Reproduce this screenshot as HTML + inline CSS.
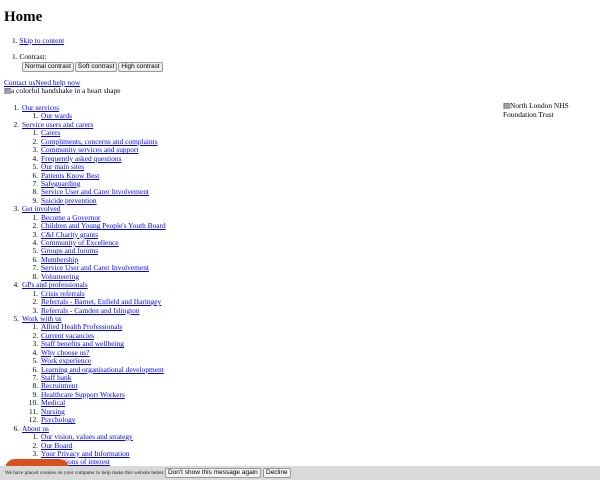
<!DOCTYPE html>
<html><head><style>
body{margin:0;width:600px;height:480px;overflow:hidden;background:#fff;font-family:"Liberation Serif",serif;font-size:7.4px;color:#000;position:relative}
a{color:#00e}
.a{position:absolute;white-space:nowrap;line-height:8.44px}
h1{position:absolute;left:4px;top:9px;margin:0;font-size:15px;font-weight:bold}
button{font-family:"Liberation Sans",sans-serif;font-size:6.5px;padding:0 2px;height:10px;background:#efefef;border:1px solid #999;border-radius:2px;margin:0 1px 0 0;line-height:8px}
.n{display:inline-block;text-align:right}
.l1 .n{width:19px}
.l2 .n{width:38px}
.list div{height:8.44px;white-space:nowrap}
.list span.t{margin-left:3px}
</style></head><body>
<h1>Home</h1>
<div class="a" style="left:12px;top:37px">1. <a href="#">Skip to content</a></div>
<div class="a" style="left:12px;top:53px">1. Contrast:</div>
<div class="a" style="left:22px;top:62px"><button>Normal contrast</button><button>Soft contrast</button><button>High contrast</button></div>
<div class="a" style="left:4px;top:79px"><a href="#">Contact us</a><a href="#">Need help now</a></div>
<div class="a" style="left:4px;top:87px">&#9636;a colorful handshake in a heart shape</div>
<div class="a" style="left:503px;top:102px;line-height:8.5px">&#9636;North London NHS<br>Foundation Trust</div>
<div class="list" style="position:absolute;left:0;top:104px;line-height:8.44px">
<div class="l1"><span class="n">1.</span><span class="t"><a href="#">Our services</a></span></div>
<div class="l2"><span class="n">1.</span><span class="t"><a href="#">Our wards</a></span></div>
<div class="l1"><span class="n">2.</span><span class="t"><a href="#">Service users and carers</a></span></div>
<div class="l2"><span class="n">1.</span><span class="t"><a href="#">Carers</a></span></div>
<div class="l2"><span class="n">2.</span><span class="t"><a href="#">Compliments, concerns and complaints</a></span></div>
<div class="l2"><span class="n">3.</span><span class="t"><a href="#">Community services and support</a></span></div>
<div class="l2"><span class="n">4.</span><span class="t"><a href="#">Frequently asked questions</a></span></div>
<div class="l2"><span class="n">5.</span><span class="t"><a href="#">Our main sites</a></span></div>
<div class="l2"><span class="n">6.</span><span class="t"><a href="#">Patients Know Best</a></span></div>
<div class="l2"><span class="n">7.</span><span class="t"><a href="#">Safeguarding</a></span></div>
<div class="l2"><span class="n">8.</span><span class="t"><a href="#">Service User and Carer Involvement</a></span></div>
<div class="l2"><span class="n">9.</span><span class="t"><a href="#">Suicide prevention</a></span></div>
<div class="l1"><span class="n">3.</span><span class="t"><a href="#">Get involved</a></span></div>
<div class="l2"><span class="n">1.</span><span class="t"><a href="#">Become a Governor</a></span></div>
<div class="l2"><span class="n">2.</span><span class="t"><a href="#">Children and Young People's Youth Board</a></span></div>
<div class="l2"><span class="n">3.</span><span class="t"><a href="#">C&amp;I Charity grants</a></span></div>
<div class="l2"><span class="n">4.</span><span class="t"><a href="#">Community of Excellence</a></span></div>
<div class="l2"><span class="n">5.</span><span class="t"><a href="#">Groups and forums</a></span></div>
<div class="l2"><span class="n">6.</span><span class="t"><a href="#">Membership</a></span></div>
<div class="l2"><span class="n">7.</span><span class="t"><a href="#">Service User and Carer Involvement</a></span></div>
<div class="l2"><span class="n">8.</span><span class="t"><a href="#">Volunteering</a></span></div>
<div class="l1"><span class="n">4.</span><span class="t"><a href="#">GPs and professionals</a></span></div>
<div class="l2"><span class="n">1.</span><span class="t"><a href="#">Crisis referrals</a></span></div>
<div class="l2"><span class="n">2.</span><span class="t"><a href="#">Referrals - Barnet, Enfield and Haringey</a></span></div>
<div class="l2"><span class="n">3.</span><span class="t"><a href="#">Referrals - Camden and Islington</a></span></div>
<div class="l1"><span class="n">5.</span><span class="t"><a href="#">Work with us</a></span></div>
<div class="l2"><span class="n">1.</span><span class="t"><a href="#">Allied Health Professionals</a></span></div>
<div class="l2"><span class="n">2.</span><span class="t"><a href="#">Current vacancies</a></span></div>
<div class="l2"><span class="n">3.</span><span class="t"><a href="#">Staff benefits and wellbeing</a></span></div>
<div class="l2"><span class="n">4.</span><span class="t"><a href="#">Why choose us?</a></span></div>
<div class="l2"><span class="n">5.</span><span class="t"><a href="#">Work experience</a></span></div>
<div class="l2"><span class="n">6.</span><span class="t"><a href="#">Learning and organisational development</a></span></div>
<div class="l2"><span class="n">7.</span><span class="t"><a href="#">Staff bank</a></span></div>
<div class="l2"><span class="n">8.</span><span class="t"><a href="#">Recruitment</a></span></div>
<div class="l2"><span class="n">9.</span><span class="t"><a href="#">Healthcare Support Workers</a></span></div>
<div class="l2"><span class="n">10.</span><span class="t"><a href="#">Medical</a></span></div>
<div class="l2"><span class="n">11.</span><span class="t"><a href="#">Nursing</a></span></div>
<div class="l2"><span class="n">12.</span><span class="t"><a href="#">Psychology</a></span></div>
<div class="l1"><span class="n">6.</span><span class="t"><a href="#">About us</a></span></div>
<div class="l2"><span class="n">1.</span><span class="t"><a href="#">Our vision, values and strategy</a></span></div>
<div class="l2"><span class="n">2.</span><span class="t"><a href="#">Our Board</a></span></div>
<div class="l2"><span class="n">3.</span><span class="t"><a href="#">Your Privacy and Information</a></span></div>
<div class="l2"><span class="n">4.</span><span class="t"><a href="#">Declarations of interest</a></span></div>
</div>
<div style="position:absolute;left:5px;top:459px;width:64px;height:16px;background:#d9501f;border-radius:10px 10px 0 0"></div>
<div style="position:absolute;left:0;top:466px;width:600px;height:14px;background:#d9d9d9"></div>
<div class="a" style="left:5px;top:469px;font-size:5.3px;color:#222">We have placed cookies on your computer to help make this website better.</div>
<div class="a" style="left:165px;top:468px"><button style="background:#f4f4f4">Don't show this message again</button></div>
<div class="a" style="left:263px;top:468px"><button style="background:#f4f4f4">Decline</button></div>
</body></html>
